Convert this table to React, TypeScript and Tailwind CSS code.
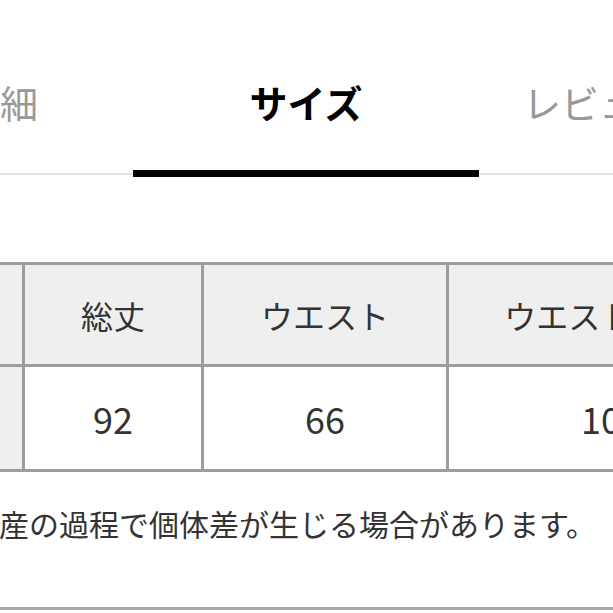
import React from "react";

const font = { fontFamily: '"Noto Sans CJK JP", "Noto Sans", sans-serif' };

export default function App() {
  return (
    <div
      className="w-[613px] h-[613px] overflow-hidden bg-white flex flex-col"
      style={font}
    >
      {/* Tabs */}
      <div className="flex h-[177px] shrink-0 ml-[-213px]">
        <div className="w-[346px] shrink-0 flex flex-col justify-between">
          <div className="pt-[83px] pl-[4px] text-center text-[38px] leading-none text-[#999999]">
            商品詳細
          </div>
          <div className="h-[7px] flex flex-col justify-center">
            <div className="h-[2px] bg-[#e3e3e3]" />
          </div>
        </div>
        <div className="w-[346px] shrink-0 flex flex-col justify-between">
          <div className="pt-[83px] text-center text-[38px] leading-none font-semibold text-black">
            サイズ
          </div>
          <div className="h-[7px] bg-black" />
        </div>
        <div className="w-[346px] shrink-0 flex flex-col justify-between">
          <div className="pt-[83px] pl-[44px] text-left text-[38px] leading-none text-[#999999] whitespace-nowrap">
            レビュー(12)
          </div>
          <div className="h-[7px] flex flex-col justify-center">
            <div className="h-[2px] bg-[#e3e3e3]" />
          </div>
        </div>
      </div>

      {/* Table */}
      <div className="mt-[85px] ml-[-100px] shrink-0">
        <div className="inline-grid grid-cols-[119px_176px_242px_324px] grid-rows-[99px_102px] gap-[3px] p-[3px] bg-[#9d9d9d] text-[#333333]">
          <div className="bg-[#efefef] flex items-center justify-center text-[32px]">
            　
          </div>
          <div className="bg-[#efefef] flex items-center justify-center text-[32px]">
            総丈
          </div>
          <div className="bg-[#efefef] flex items-center justify-center text-[32px]">
            ウエスト
          </div>
          <div className="bg-[#efefef] flex items-center justify-center text-[32px] whitespace-nowrap">
            ウエスト(最大)
          </div>
          <div className="bg-[#efefef] flex items-center justify-center text-[36px]">
            　
          </div>
          <div className="bg-white flex items-center justify-center text-[36px]">
            92
          </div>
          <div className="bg-white flex items-center justify-center text-[36px]">
            66
          </div>
          <div className="bg-white flex items-center justify-center text-[36px]">
            100
          </div>
        </div>
      </div>

      {/* Note */}
      <div className="mt-[36px] ml-[-31px] text-[30px] leading-none text-[#333333] whitespace-nowrap shrink-0">
        生産の過程で個体差が生じる場合があります。
      </div>

      <div className="flex-1" />
      <div className="h-[3px] bg-[#a8a8a8] mb-[3px] shrink-0" />
    </div>
  );
}
